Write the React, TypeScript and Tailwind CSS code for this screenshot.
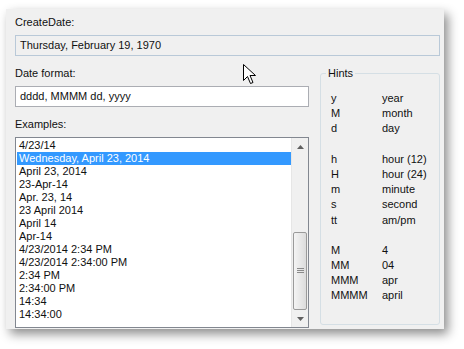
import React from "react";

const examples = [
  "4/23/14",
  "Wednesday, April 23, 2014",
  "April 23, 2014",
  "23-Apr-14",
  "Apr. 23, 14",
  "23 April 2014",
  "April 14",
  "Apr-14",
  "4/23/2014 2:34 PM",
  "4/23/2014 2:34:00 PM",
  "2:34 PM",
  "2:34:00 PM",
  "14:34",
  "14:34:00",
];

const hints: ([string, string] | null)[] = [
  ["y", "year"],
  ["M", "month"],
  ["d", "day"],
  null,
  ["h", "hour (12)"],
  ["H", "hour (24)"],
  ["m", "minute"],
  ["s", "second"],
  ["tt", "am/pm"],
  null,
  ["M", "4"],
  ["MM", "04"],
  ["MMM", "apr"],
  ["MMMM", "april"],
];

export default function App() {
  return (
    <div
      className="relative w-[464px] h-[349px] bg-white overflow-hidden text-[11px] text-[#111]"
      style={{ fontFamily: '"Liberation Sans", Arial, sans-serif' }}
    >
      <div className="ml-[6px] mt-[9px] w-[438px] h-[320px] bg-[#f0f0f0] shadow-[4px_5px_10px_rgba(0,0,0,0.45)] pl-[9px] pr-[4px] pt-[5px] flex flex-col">
        <div className="h-[16px] leading-[16px]">CreateDate:</div>
        <div className="mt-[5px] h-[21px] border border-[#b9c9d8] bg-[#f0f0f0] pl-[4px] leading-[19px]">
          Thursday, February 19, 1970
        </div>
        <div className="flex mt-[9px] gap-[11px]">
          <div className="w-[294px] flex flex-col">
            <div className="h-[16px] leading-[16px]">Date format:</div>
            <div className="mt-[5px] h-[21px] border border-[#abadb3] bg-white pl-[4px] leading-[19px]">
              dddd, MMMM dd, yyyy
            </div>
            <div className="mt-[9px] h-[16px] leading-[16px]">Examples:</div>
            <div className="mt-[5px] h-[191px] border border-[#828790] bg-white flex">
              <div className="flex-1 pt-[1px] pl-[1px]">
                {examples.map((e, i) => (
                  <div
                    key={i}
                    className={
                      "h-[13px] leading-[13px] pl-[2px] " +
                      (i === 1 ? "bg-[#3399ff] text-white" : "")
                    }
                  >
                    {e}
                  </div>
                ))}
              </div>
              <div className="w-[17px] bg-[#f0f0f0] border-l border-[#e6e6e6] flex flex-col">
                <div className="h-[17px] flex items-center justify-center">
                  <svg width="7" height="4" viewBox="0 0 7 4">
                    <path d="M0 4 L3.5 0 L7 4 Z" fill="#606060" />
                  </svg>
                </div>
                <div className="flex-1 flex flex-col justify-end">
                  <div className="h-[78px] mx-[1px] rounded-[2px] border border-[#9a9a9a] bg-gradient-to-r from-[#f4f4f4] to-[#dcdcdc] flex items-center justify-center">
                    <svg width="7" height="6" viewBox="0 0 7 6">
                      <path d="M0 0.5 H7 M0 2.5 H7 M0 4.5 H7" stroke="#8a8a8a" strokeWidth="1" />
                    </svg>
                  </div>
                </div>
                <div className="h-[17px] flex items-center justify-center">
                  <svg width="7" height="4" viewBox="0 0 7 4">
                    <path d="M0 0 L3.5 4 L7 0 Z" fill="#606060" />
                  </svg>
                </div>
              </div>
            </div>
          </div>
          <div className="relative w-[120px] h-[252px] mt-[8px] border border-[#d5dfe5] rounded-[3px]">
            <div className="absolute -top-[9px] left-[5px] bg-[#f0f0f0] px-[2px] leading-[16px]">
              Hints
            </div>
            <div className="pt-[17px] pl-[10px]">
              {hints.map((h, i) =>
                h ? (
                  <div key={i} className="flex h-[15.2px] leading-[15px]">
                    <div className="w-[51px]">{h[0]}</div>
                    <div>{h[1]}</div>
                  </div>
                ) : (
                  <div key={i} className="h-[15.2px]" />
                )
              )}
            </div>
          </div>
        </div>
      </div>
      <svg
        className="absolute left-[243px] top-[64px]"
        width="14"
        height="22"
        viewBox="0 0 14 22"
      >
        <path
          d="M0.5 0.5 L0.5 16.5 L4.5 12.5 L7.5 19.5 L10 18.5 L7 11.5 L12.5 11.5 Z"
          fill="white"
          stroke="black"
          strokeWidth="1"
          strokeLinejoin="miter"
        />
      </svg>
    </div>
  );
}
